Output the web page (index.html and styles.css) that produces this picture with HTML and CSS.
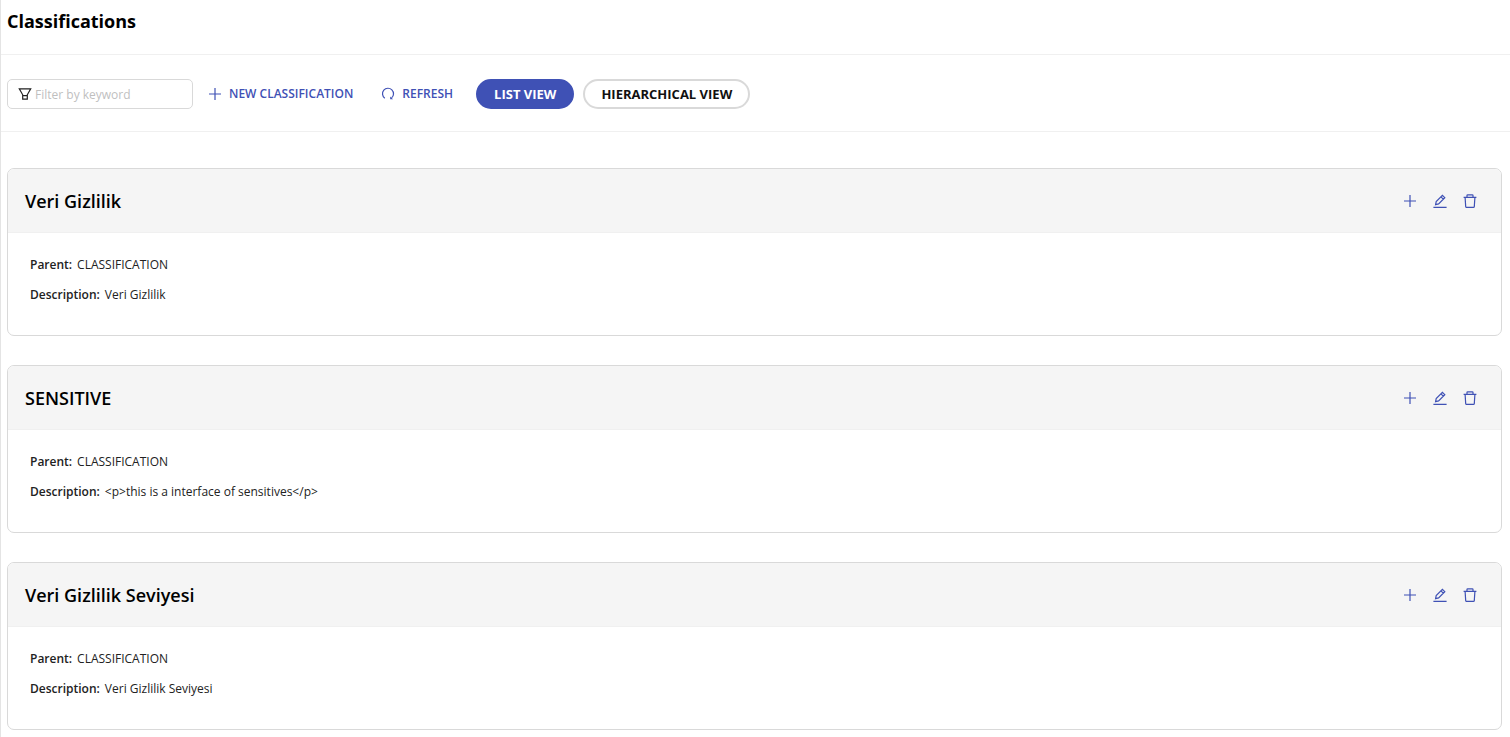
FILE: index.html
```html
<!DOCTYPE html>
<html lang="en">
<head>
<meta charset="UTF-8">
<meta name="viewport" content="width=device-width, initial-scale=1.0">
<title>Classifications</title>
<link rel="stylesheet" href="styles.css">
</head>
<body>
<!-- shared icons -->
<svg class="sprite" aria-hidden="true">
    <symbol id="icon-plus" viewBox="0 0 14 14">
        <path d="M7 1v12M1 7h12"/>
    </symbol>
    <symbol id="icon-edit" viewBox="0 0 14 14">
        <path d="M.4 13.3h13.2M2.6 10.6l.6-3.1L9.4 1.3l2.4 2.4-6.2 6.2zM7.9 2.8l2.4 2.4"/>
    </symbol>
    <symbol id="icon-trash" viewBox="0 0 14 14">
        <path d="M.6 3.4h12.8M2.1 3.4l.6 9.2q.1.8.9.8h6.8q.8 0 .9-.8l.6-9.2M4 3.4V1.5q0-.7.7-.7h4.6q.7 0 .7.7v1.9"/>
    </symbol>
    <symbol id="icon-refresh" viewBox="0 0 14 14">
        <path d="M3.8 11.2A5.5 5.5 0 1 1 10.6 10.9"/>
        <path class="solid" d="M9.2 9.4v2.8h2.8z"/>
    </symbol>
    <symbol id="icon-filter" viewBox="0 0 14 14">
        <path d="M1.3 1.8h11.4L9.3 7.8v4.4H4.7V7.8zM4.7 8.6h4.6"/>
    </symbol>
</svg>

<header class="page-header">
    <h1>Classifications</h1>
</header>

<div class="toolbar">
    <label class="filter">
        <svg class="icon"><use href="#icon-filter"/></svg>
        <input type="text" placeholder="Filter by keyword" aria-label="Filter by keyword">
    </label>
    <button type="button" class="link-button new-button">
        <svg class="icon"><use href="#icon-plus"/></svg>
        NEW CLASSIFICATION
    </button>
    <button type="button" class="link-button refresh-button">
        <svg class="icon"><use href="#icon-refresh"/></svg>
        REFRESH
    </button>
    <div class="views">
        <button type="button" class="pill active">LIST VIEW</button>
        <button type="button" class="pill">HIERARCHICAL VIEW</button>
    </div>
</div>

<main class="list">
    <section class="card">
        <div class="card-header">
            <h2>Veri Gizlilik</h2>
            <div class="actions">
                <button type="button" aria-label="Add"><svg class="icon"><use href="#icon-plus"/></svg></button>
                <button type="button" aria-label="Edit"><svg class="icon"><use href="#icon-edit"/></svg></button>
                <button type="button" aria-label="Delete"><svg class="icon"><use href="#icon-trash"/></svg></button>
            </div>
        </div>
        <dl class="card-body">
            <div><dt>Parent:</dt><dd>CLASSIFICATION</dd></div>
            <div><dt>Description:</dt><dd>Veri Gizlilik</dd></div>
        </dl>
    </section>

    <section class="card">
        <div class="card-header">
            <h2>SENSITIVE</h2>
            <div class="actions">
                <button type="button" aria-label="Add"><svg class="icon"><use href="#icon-plus"/></svg></button>
                <button type="button" aria-label="Edit"><svg class="icon"><use href="#icon-edit"/></svg></button>
                <button type="button" aria-label="Delete"><svg class="icon"><use href="#icon-trash"/></svg></button>
            </div>
        </div>
        <dl class="card-body">
            <div><dt>Parent:</dt><dd>CLASSIFICATION</dd></div>
            <div><dt>Description:</dt><dd>&lt;p&gt;this is a interface of sensitives&lt;/p&gt;</dd></div>
        </dl>
    </section>

    <section class="card">
        <div class="card-header">
            <h2>Veri Gizlilik Seviyesi</h2>
            <div class="actions">
                <button type="button" aria-label="Add"><svg class="icon"><use href="#icon-plus"/></svg></button>
                <button type="button" aria-label="Edit"><svg class="icon"><use href="#icon-edit"/></svg></button>
                <button type="button" aria-label="Delete"><svg class="icon"><use href="#icon-trash"/></svg></button>
            </div>
        </div>
        <dl class="card-body">
            <div><dt>Parent:</dt><dd>CLASSIFICATION</dd></div>
            <div><dt>Description:</dt><dd>Veri Gizlilik Seviyesi</dd></div>
        </dl>
    </section>
</main>
</body>
</html>
```
FILE: styles.css
```css
* {
    box-sizing: border-box;
}

body {
    margin: 0;
    border-left: 1px solid #e4e4e4;
    background-color: #fff;
    color: #222;
    font-family: "Segoe UI", "Open Sans", "Noto Sans", sans-serif;
    font-size: 12px;
    line-height: 20px;
}

h1, h2, dl, dd {
    margin: 0;
}

button, input {
    font-family: inherit;
}

button {
    padding: 0;
    border: none;
    background: none;
    cursor: pointer;
}

.sprite {
    display: none;
}

.icon {
    display: block;
    flex: none;
    width: 14px;
    height: 14px;
    fill: none;
    stroke: currentColor;
    stroke-width: 1.2;
}

.solid {
    fill: currentColor;
    stroke: none;
}

.page-header {
    padding: 8px 6px 20px;
    border-bottom: 1px solid #f0f0f0;
}

h1 {
    color: #000;
    font-size: 18px;
    font-weight: 700;
    line-height: 26px;
}

.toolbar {
    display: flex;
    align-items: center;
    padding: 24px 6px 22px;
    border-bottom: 1px solid #f0f0f0;
}

.filter {
    display: flex;
    align-items: center;
    gap: 3px;
    width: 186px;
    height: 30px;
    padding: 0 10px;
    border: 1px solid #d9d9d9;
    border-radius: 5px;
    color: #222;
}

.filter input {
    width: 100%;
    padding: 0;
    border: none;
    outline: none;
    font-size: 12px;
}

.filter input::placeholder {
    color: #bfbfbf;
}

.link-button {
    display: flex;
    align-items: center;
    gap: 7px;
    color: #3f51b5;
    font-size: 12px;
    font-weight: 600;
    line-height: 20px;
}

.new-button {
    margin-left: 15px;
}

.refresh-button {
    margin-left: 28px;
}

.views {
    display: flex;
    gap: 9px;
    margin-left: 23px;
}

.pill {
    height: 30px;
    padding: 0 16px;
    border: 2px solid #d9d9d9;
    border-radius: 15px;
    color: #111;
    font-size: 13px;
    font-weight: 700;
}

.pill.active {
    border-color: #3f51b5;
    background-color: #3f51b5;
    color: #fff;
}

.list {
    display: flex;
    flex-direction: column;
    gap: 29px;
    padding: 36px 8px 29px 6px;
}

.card {
    overflow: hidden;
    border: 1px solid #d9d9d9;
    border-radius: 7px;
}

.card-header {
    display: flex;
    align-items: center;
    justify-content: space-between;
    height: 64px;
    padding: 0 24px 0 17px;
    border-bottom: 1px solid #f0f0f0;
    background-color: #f5f5f5;
}

h2 {
    color: #000;
    font-size: 18px;
    font-weight: 600;
    line-height: 26px;
}

.actions {
    display: flex;
    gap: 16px;
    color: #3f51b5;
}

.actions button {
    color: inherit;
}

.card-body {
    display: flex;
    flex-direction: column;
    gap: 10px;
    padding: 22px 22px 30px;
}

.card-body div {
    display: flex;
    gap: 5px;
}

dt {
    font-weight: 600;
}
```
